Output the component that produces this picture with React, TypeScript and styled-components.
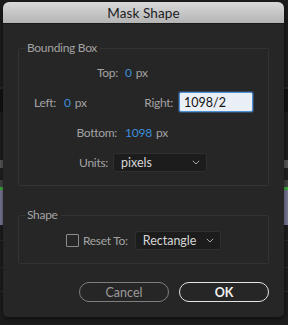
import styled, { createGlobalStyle } from "styled-components";

const GlobalStyle = createGlobalStyle`
  html, body {
    margin: 0;
    padding: 0;
    background: #1d1d1d;
  }
  body {
    font-family: Lato, "Liberation Sans", sans-serif;
  }
`;

export default function App() {
  return (
    <Page>
      <GlobalStyle />
      <Dialog>
        <TitleBar>Mask Shape</TitleBar>
        <Body>
          <Group>
            <Legend>Bounding Box</Legend>
            <Rows>
              <Row>
                <Label $w={99}>Top:</Label>
                <Value $gap={7}>
                  <Num>0</Num>
                  <Unit>px</Unit>
                </Value>
              </Row>
              <Row $pad={15}>
                <Label>Left:</Label>
                <Value $gap={8}>
                  <Num>0</Num>
                  <Unit>px</Unit>
                </Value>
                <Push>
                  <Label>Right:</Label>
                  <Field defaultValue="1098/2" />
                </Push>
              </Row>
              <Row>
                <Label $w={98}>Bottom:</Label>
                <Value $gap={8}>
                  <Num>1098</Num>
                  <Unit>px</Unit>
                </Value>
              </Row>
              <Row>
                <Label $w={89}>Units:</Label>
                <Select $w={94} $gap={5}>
                  pixels
                  <Chevron />
                </Select>
              </Row>
            </Rows>
          </Group>

          <Group $shape>
            <Legend>Shape</Legend>
            <Row $pad={47}>
              <Check />
              <Label>Reset To:</Label>
              <Select $w={86} $gap={7}>
                Rectangle
                <Chevron />
              </Select>
            </Row>
          </Group>

          <Buttons>
            <Button>Cancel</Button>
            <Button $primary>OK</Button>
          </Buttons>
        </Body>
      </Dialog>
    </Page>
  );
}

function Chevron() {
  return (
    <ChevronSvg width="8" height="5" viewBox="0 0 8 5">
      <path d="M0.8 0.8 L4 4 L7.2 0.8" fill="none" stroke="#a8a8a8" strokeWidth="1" />
    </ChevronSvg>
  );
}

const Page = styled.div`
  width: 288px;
  height: 325px;
  box-sizing: border-box;
  padding: 2px 4px 0 3px;
  overflow: hidden;
  background: linear-gradient(
    to bottom,
    #1d1d1d 0px,
    #1d1d1d 87px,
    #2b2b2b 87px,
    #2b2b2b 89px,
    #131313 89px,
    #131313 112px,
    #1f1f1f 112px,
    #1f1f1f 160px,
    #5c5c5c 160px,
    #5c5c5c 168px,
    #222 168px,
    #222 180px,
    #474747 180px,
    #474747 187px,
    #3db53d 187px,
    #3db53d 190px,
    #7e7d9b 190px,
    #7e7d9b 225px,
    #1f1f1f 225px,
    #1f1f1f 240px,
    #2d2d2d 240px,
    #2d2d2d 241px,
    #1f1f1f 241px,
    #1f1f1f 267px,
    #2d2d2d 267px,
    #2d2d2d 268px,
    #1f1f1f 268px,
    #1f1f1f 291px,
    #2d2d2d 291px,
    #2d2d2d 292px,
    #1d1d1d 292px
  );
`;

const Dialog = styled.div`
  width: 281px;
  height: 315px;
  background: #262626;
  border-radius: 6px 6px 5px 5px;
  overflow: hidden;
  box-shadow: 0 2px 6px rgba(0, 0, 0, 0.6);
  display: flex;
  flex-direction: column;
`;

const TitleBar = styled.div`
  height: 21px;
  flex: none;
  display: flex;
  align-items: center;
  justify-content: center;
  background: linear-gradient(to bottom, #d9d9d9, #b4b4b4);
  border-bottom: 1px solid #1a1a1a;
  color: #1c1c1c;
  font-size: 13.5px;
  letter-spacing: 0.1px;
`;

const Body = styled.div`
  flex: 1;
  display: flex;
  flex-direction: column;
  padding: 17px 15px 15px 15px;
`;

const Group = styled.fieldset<{ $shape?: boolean }>`
  margin: ${(p) => (p.$shape ? "22px 0 0 0" : "0")};
  padding: ${(p) => (p.$shape ? "8px 0 13px 0" : "7px 0 13px 0")};
  border: 1px solid #333333;
  border-radius: 2px;
  min-width: 0;
`;

const Legend = styled.legend`
  margin-left: 7px;
  padding: 0 3px 0 1px;
  font-size: 12px;
  letter-spacing: -0.3px;
  line-height: 14px;
  color: #a3a3a3;
`;

const Rows = styled.div`
  display: flex;
  flex-direction: column;
  gap: 10px;
`;

const Row = styled.div<{ $pad?: number }>`
  height: 20px;
  display: flex;
  align-items: center;
  padding: 0 15px 0 ${(p) => p.$pad ?? 0}px;
`;

const Label = styled.span<{ $w?: number }>`
  flex: none;
  width: ${(p) => (p.$w ? `${p.$w}px` : "auto")};
  text-align: right;
  font-size: 12px;
  letter-spacing: -0.3px;
  color: #a3a3a3;
`;

const Value = styled.span<{ $gap: number }>`
  margin-left: ${(p) => p.$gap}px;
  display: flex;
  gap: 4px;
  font-size: 12px;
  letter-spacing: -0.2px;
`;

const Num = styled.span`
  color: #3d8fdb;
`;

const Unit = styled.span`
  color: #a3a3a3;
`;

const Push = styled.div`
  margin-left: auto;
  display: flex;
  align-items: center;
  gap: 6px;
`;

const Field = styled.input`
  box-sizing: border-box;
  width: 74px;
  height: 20px;
  margin: 0;
  padding: 0 4px;
  border: 1px solid #4f8fd6;
  border-radius: 2px;
  background: #eaeff5;
  box-shadow: 0 0 0 1px rgba(79, 143, 214, 0.35);
  font-family: Lato, "Liberation Sans", sans-serif;
  font-size: 12.5px;
  color: #111;
  outline: none;
`;

const Select = styled.div<{ $w: number; $gap: number }>`
  box-sizing: border-box;
  width: ${(p) => p.$w}px;
  height: 19px;
  margin-left: ${(p) => p.$gap}px;
  padding: 0 6px 0 7px;
  display: flex;
  align-items: center;
  justify-content: space-between;
  background: #1c1c1c;
  border: 1px solid #2f2f2f;
  border-radius: 3px;
  font-size: 12.5px;
  color: #d6d6d6;
`;

const ChevronSvg = styled.svg`
  flex: none;
`;

const Check = styled.span`
  box-sizing: border-box;
  width: 13px;
  height: 13px;
  margin-right: 4px;
  border: 1.5px solid #8c8c8c;
  border-radius: 1px;
`;

const Buttons = styled.div`
  margin-top: 18px;
  display: flex;
  justify-content: flex-end;
  gap: 10px;
`;

const Button = styled.button<{ $primary?: boolean }>`
  box-sizing: border-box;
  width: 90px;
  height: 20px;
  padding: 0;
  border-radius: 10px;
  border: 1.5px solid ${(p) => (p.$primary ? "#e4e4e4" : "#7e7e7e")};
  background: transparent;
  color: ${(p) => (p.$primary ? "#f2f2f2" : "#9c9c9c")};
  font-family: Lato, "Liberation Sans", sans-serif;
  font-size: 12.5px;
  font-weight: ${(p) => (p.$primary ? 700 : 400)};
`;
